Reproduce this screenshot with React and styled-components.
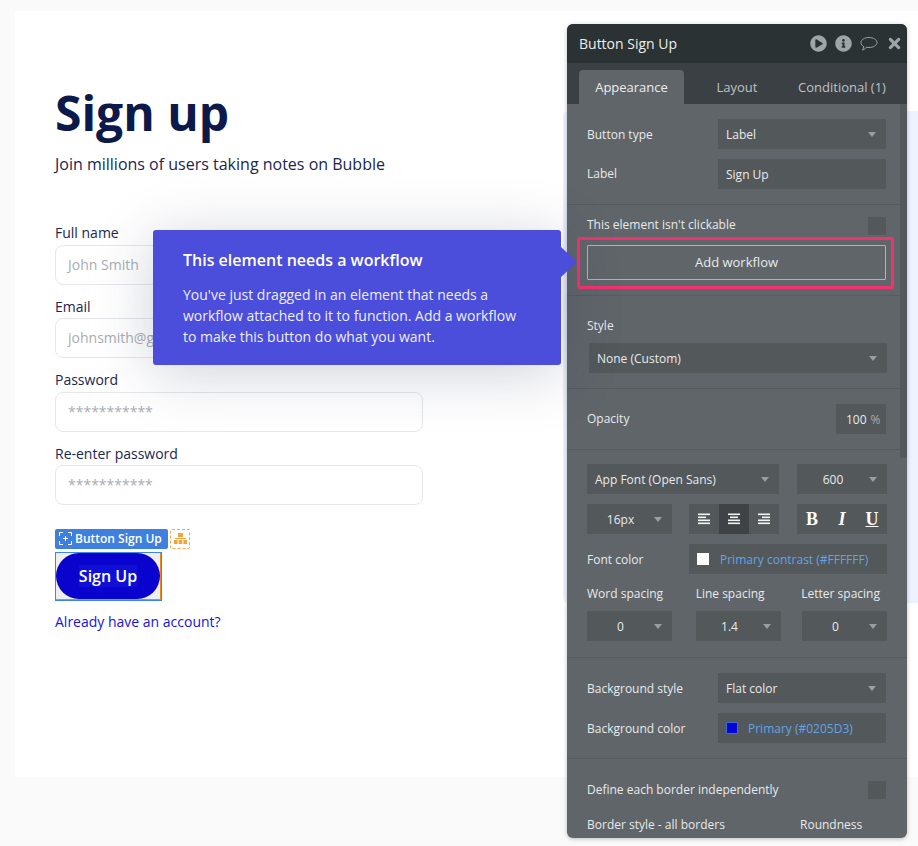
import React from 'react';
import styled, { createGlobalStyle } from 'styled-components';
import { FaPlayCircle, FaInfoCircle, FaTimes } from 'react-icons/fa';

const GlobalStyle = createGlobalStyle`
  html, body {
    margin: 0;
    padding: 0;
    background: #fafafa;
  }
  * {
    box-sizing: border-box;
  }
`;

const Page = styled.div`
  position: relative;
  width: 918px;
  height: 846px;
  padding: 11px 0 0 15px;
  overflow: hidden;
  font-family: "Open Sans", "Liberation Sans", sans-serif;
`;

const Canvas = styled.div`
  height: 766px;
  background: #fff;
  padding: 66px 0 0 40px;
`;

const Title = styled.h1`
  margin: 0;
  font-size: 48px;
  line-height: 72px;
  font-weight: 700;
  color: #0b1a4a;
`;

const Subtitle = styled.p`
  margin: 2px 0 46.4px;
  font-size: 16px;
  line-height: 26px;
  color: #1b2650;
`;

const Field = styled.div`
  width: 368px;
  margin-bottom: 12px;
`;

const FieldLabel = styled.div`
  font-size: 14px;
  line-height: 20px;
  margin-bottom: 1.5px;
  color: #1b2650;
`;

const Input = styled.div`
  height: 40px;
  border: 1px solid #e5e7eb;
  border-radius: 8px;
  padding-left: 12px;
  font-size: 14px;
  line-height: 38px;
  color: #a9adb3;
  background: #fff;
  white-space: nowrap;
  overflow: hidden;
`;

const BadgeRow = styled.div`
  display: flex;
  gap: 2px;
  margin-top: 23.6px;
  height: 20px;
`;

const Badge = styled.div`
  display: flex;
  align-items: center;
  gap: 3px;
  width: 113px;
  padding-left: 4px;
  background: #3f7fdd;
  border-radius: 2px;
  color: #fff;
  font-size: 12px;
  font-weight: 600;
  white-space: nowrap;
`;

const HierarchyBadge = styled.div`
  display: flex;
  align-items: center;
  justify-content: center;
  width: 20px;
  border: 1px dashed #f5a742;
  border-radius: 2px;
`;

const ButtonFrame = styled.div`
  width: 107px;
  height: 49px;
  margin-top: 3px;
  background: #eeeeee;
  border: 1px solid #3f86e4;
  box-shadow: inset -1px -1px 0 #e98a1b;
  padding: 0 1px 1px 0;
`;

const SignUpButton = styled.div`
  display: flex;
  align-items: center;
  justify-content: center;
  height: 100%;
  border-radius: 24px;
  background: #0a02cd;
  color: #fff;
  font-size: 16px;
  font-weight: 600;
`;

const ButtonText = styled.span`
  background: #0f0fd6;
  line-height: 22px;
`;

const LoginLink = styled.a`
  display: block;
  margin-top: 11px;
  font-size: 14px;
  line-height: 20px;
  color: #1414d6;
`;

const Backdrop = styled.div`
  position: absolute;
  left: 563px;
  top: 111px;
  width: 355px;
  height: 492px;
  background: #eef2fe;
  border-radius: 6px 0 0 6px;
`;

const Tooltip = styled.div`
  position: absolute;
  left: 153px;
  top: 230px;
  width: 408px;
  height: 135px;
  padding: 19px 30px 0;
  background: #4b4ddb;
  border-radius: 3px;
  color: #fff;
  box-shadow: 0 8px 60px rgba(35, 45, 85, 0.22);

  &::after {
    content: '';
    position: absolute;
    left: 100%;
    top: 17px;
    border-style: solid;
    border-width: 15.5px 0 15.5px 16px;
    border-color: transparent transparent transparent #4b4ddb;
  }
`;

const TooltipTitle = styled.div`
  font-size: 16px;
  font-weight: 600;
  line-height: 22px;
  margin-bottom: 13px;
`;

const TooltipBody = styled.div`
  font-size: 14px;
  line-height: 21px;
  color: #eeeefb;
`;

const Panel = styled.div`
  position: absolute;
  left: 567px;
  top: 24px;
  width: 340px;
  height: 814px;
  display: flex;
  flex-direction: column;
  overflow: hidden;
  background: #5f6569;
  border-radius: 6px;
  box-shadow: 0 1px 4px rgba(0, 0, 0, 0.25);
  color: #e8eaeb;
  font-size: 12px;
`;

const PanelHeader = styled.div`
  display: flex;
  align-items: center;
  justify-content: space-between;
  flex: none;
  height: 39px;
  padding: 0 4px 0 12px;
  background: #2b3234;
  font-size: 14px;
  color: #eceeee;
`;

const HeaderIcons = styled.div`
  display: flex;
  align-items: center;
  gap: 8px;
  color: #9da5a8;
  font-size: 17px;

  svg {
    display: block;
  }
`;

const Tabs = styled.div`
  display: flex;
  flex: none;
  align-items: flex-end;
  height: 41px;
  padding-left: 12px;
  background: #3a4043;
`;

const Tab = styled.div`
  display: flex;
  align-items: center;
  justify-content: center;
  width: ${p => p.$width}px;
  height: 34px;
  border-radius: 4px 4px 0 0;
  background: ${p => (p.$active ? '#5f6569' : 'transparent')};
  color: ${p => (p.$active ? '#eceeee' : '#bfc3c5')};
  font-size: 13px;
  white-space: nowrap;
`;

const Scrollbar = styled.div`
  position: absolute;
  right: 0;
  top: 80px;
  width: 7px;
  height: 354px;
  background: #54595c;
`;

const Section = styled.div`
  display: flex;
  flex-direction: column;
  flex: none;
  gap: ${p => p.$gap ?? 10}px;
  padding: ${p => p.$top ?? 15}px 21px ${p => p.$bottom ?? 15}px 20px;
  border-bottom: ${p => (p.$last ? 'none' : '1px solid #565b5e')};
`;

const Row = styled.div`
  display: flex;
  align-items: center;
  justify-content: space-between;
  flex: none;
  height: ${p => p.$height ?? 30}px;
  margin-top: ${p => p.$mt ?? 0}px;
  margin-right: ${p => p.$mr ?? 0}px;
`;

const RowText = styled.span`
  margin-top: ${p => p.$lift ?? 0}px;
  white-space: nowrap;
`;

const FlexRow = styled.div`
  display: flex;
  height: 30px;
`;

const SelectBox = styled.div`
  position: relative;
  display: flex;
  align-items: center;
  justify-content: ${p => (p.$center ? 'center' : 'flex-start')};
  flex: none;
  width: ${p => p.$width}px;
  height: 30px;
  margin-left: ${p => p.$ml ?? 0}px;
  padding: ${p => (p.$center ? '0 18px 0 0' : `0 0 0 ${p.$pad ?? 8}px`)};
  background: #53585b;
  color: #e8eaeb;
  white-space: nowrap;

  &::after {
    content: ${p => (p.$noArrow ? 'none' : "''")};
    position: absolute;
    right: 10px;
    top: 13px;
    border-style: solid;
    border-width: 5px 4.5px 0;
    border-color: #999ea1 transparent transparent;
  }
`;

const IconGroup = styled.div`
  display: flex;
  flex: none;
  width: 90px;
  height: 30px;
  margin-left: ${p => p.$ml}px;
  background: #53585b;
`;

const Check = styled.div`
  width: 18px;
  height: 18px;
  background: #53585b;
`;

const Percent = styled.span`
  color: #a9adaf;
  margin-left: 4px;
`;

const Highlight = styled.div`
  position: relative;
  height: 35px;

  &::before {
    content: '';
    position: absolute;
    inset: -8px -8px -9px -10px;
    border: 3px solid #f1326e;
    border-radius: 2px;
  }
`;

const WorkflowButton = styled.div`
  position: relative;
  display: flex;
  align-items: center;
  justify-content: center;
  height: 100%;
  padding-bottom: 2px;
  border: 1px solid #e8b02e;
  border-radius: 1px;
  font-size: 13px;
`;

const IconCell = styled.div`
  display: flex;
  align-items: center;
  justify-content: center;
  width: 30px;
  height: 30px;
  background: ${p => (p.$active ? '#3f4345' : 'transparent')};
  color: #fff;
  font-family: "Liberation Serif", serif;
  font-size: 18px;
  font-weight: 700;
  font-style: ${p => (p.$italic ? 'italic' : 'normal')};
  text-decoration: ${p => (p.$underline ? 'underline' : 'none')};
`;

const Swatch = styled.span`
  width: 12px;
  height: 12px;
  flex: none;
  margin-right: ${p => p.$gap ?? 10}px;
  background: ${p => p.$color};
  border: ${p => (p.$outlined ? '1px solid #3c6ed0' : 'none')};
`;

const ColorName = styled.span`
  color: #62a3e6;
`;

const SpacingLabels = styled.div`
  display: flex;
  flex: none;
  height: 18px;
  margin: 1px 0 -2px;
`;

const SpacingLabel = styled.span`
  width: ${p => p.$width}px;
  white-space: nowrap;
`;

const AlignIcon = ({ align }) => {
  return (
    <svg width="12" height="12" viewBox="0 0 12 12">
      {[12, 8, 12, 12].map((width, i) => {
        const left = align === 'left' ? 0 : align === 'right' ? 12 - width : (12 - width) / 2;
        return <rect key={i} x={left} y={i * 3 + 0.5} width={width} height="1.6" fill="#f2f3f3" />;
      })}
    </svg>
  );
};

const CommentIcon = () => (
  <svg width="18" height="16" viewBox="0 0 18 16" fill="none" stroke="#9da5a8" strokeWidth="1">
    <path d="M9 1.5c4.4 0 8 2.2 8 5s-3.600 5-8 5c-.9 0-1.700-.1-2.500-.3C5.500 12.600 4 13.800 2.400 14c.8-1 1.300-2 1.400-3.300C2 9.800 1 8.200 1 6.500c0-2.800 3.600-5 8-5z" />
  </svg>
);

const FocusIcon = () => (
  <svg width="13" height="13" viewBox="0 0 13 13" fill="none" stroke="#fff" strokeWidth="1">
    <path d="M.5 4V.5H4M9 .5h3.500V4M12.500 9v3.500H9M4 12.500H.5V9M6.500 4v5M4 6.500h5" />
  </svg>
);

const HierarchyIcon = () => (
  <svg width="13" height="11" viewBox="0 0 13 11" fill="#f2a33a">
    <rect x="4" y="0" width="5" height="4" />
    <rect x="1" y="5" width="11" height="1" />
    <rect x="0" y="7" width="3.600" height="4" />
    <rect x="4.700" y="7" width="3.600" height="4" />
    <rect x="9.400" y="7" width="3.600" height="4" />
  </svg>
);

export default function App() {
  return (
    <>
      <GlobalStyle />
      <Page>
        <Canvas>
          <Title>Sign up</Title>
          <Subtitle>Join millions of users taking notes on Bubble</Subtitle>
          <Field>
            <FieldLabel>Full name</FieldLabel>
            <Input>John Smith</Input>
          </Field>
          <Field>
            <FieldLabel>Email</FieldLabel>
            <Input>johnsmith@gmail.com</Input>
          </Field>
          <Field>
            <FieldLabel>Password</FieldLabel>
            <Input>***********</Input>
          </Field>
          <Field>
            <FieldLabel>Re-enter password</FieldLabel>
            <Input>***********</Input>
          </Field>
          <BadgeRow>
            <Badge>
              <FocusIcon />
              Button Sign Up
            </Badge>
            <HierarchyBadge>
              <HierarchyIcon />
            </HierarchyBadge>
          </BadgeRow>
          <ButtonFrame>
            <SignUpButton>
              <ButtonText>Sign Up</ButtonText>
            </SignUpButton>
          </ButtonFrame>
          <LoginLink>Already have an account?</LoginLink>
        </Canvas>

        <Backdrop />

        <Panel>
          <PanelHeader>
            Button Sign Up
            <HeaderIcons>
              <FaPlayCircle />
              <FaInfoCircle />
              <CommentIcon />
              <FaTimes />
            </HeaderIcons>
          </PanelHeader>
          <Tabs>
            <Tab $active $width={105}>Appearance</Tab>
            <Tab $width={106}>Layout</Tab>
            <Tab $width={104}>Conditional (1)</Tab>
          </Tabs>
          <Scrollbar />

          <Section>
            <Row>
              Button type
              <SelectBox $width={168}>Label</SelectBox>
            </Row>
            <Row>
              <RowText $lift={-1}>Label</RowText>
              <SelectBox $width={168} $noArrow>Sign Up</SelectBox>
            </Row>
          </Section>

          <Section $top={12}>
            <Row $height={18}>
              <RowText $lift={-4}>This element isn't clickable</RowText>
              <Check />
            </Row>
            <Highlight>
              <WorkflowButton>Add workflow</WorkflowButton>
            </Highlight>
          </Section>

          <Section $top={20} $gap={9}>
            <Row $height={18}>Style</Row>
            <SelectBox $width={298} $ml={2}>None (Custom)</SelectBox>
          </Section>

          <Section>
            <Row>
              <RowText $lift={-2}>Opacity</RowText>
              <SelectBox $width={50} $noArrow $pad={10}>
                100<Percent>%</Percent>
              </SelectBox>
            </Row>
          </Section>

          <Section $top={14} $bottom={16}>
            <FlexRow>
              <SelectBox $width={192}>App Font (Open Sans)</SelectBox>
              <SelectBox $width={90} $ml={18} $center>600</SelectBox>
            </FlexRow>
            <FlexRow>
              <SelectBox $width={85} $center>16px</SelectBox>
              <IconGroup $ml={17}>
                <IconCell><AlignIcon align="left" /></IconCell>
                <IconCell $active><AlignIcon align="center" /></IconCell>
                <IconCell><AlignIcon align="right" /></IconCell>
              </IconGroup>
              <IconGroup $ml={18}>
                <IconCell>B</IconCell>
                <IconCell $italic>I</IconCell>
                <IconCell $underline>U</IconCell>
              </IconGroup>
            </FlexRow>
            <Row $mr={-1}>
              Font color
              <SelectBox $width={198} $noArrow>
                <Swatch $color="#fff" $gap={11} />
                <ColorName>Primary contrast (#FFFFFF)</ColorName>
              </SelectBox>
            </Row>
            <SpacingLabels>
              <SpacingLabel $width={109}>Word spacing</SpacingLabel>
              <SpacingLabel $width={106}>Line spacing</SpacingLabel>
              <SpacingLabel $width={85}>Letter spacing</SpacingLabel>
            </SpacingLabels>
            <FlexRow>
              <SelectBox $width={85} $center>0</SelectBox>
              <SelectBox $width={85} $ml={24} $center>1.4</SelectBox>
              <SelectBox $width={85} $ml={21} $center>0</SelectBox>
            </FlexRow>
          </Section>

          <Section>
            <Row>
              Background style
              <SelectBox $width={168}>Flat color</SelectBox>
            </Row>
            <Row>
              Background color
              <SelectBox $width={168} $noArrow>
                <Swatch $color="#0205d3" $outlined />
                <ColorName>Primary (#0205D3)</ColorName>
              </SelectBox>
            </Row>
          </Section>

          <Section $top={22} $last>
            <Row $height={18}>
              <RowText $lift={-2}>Define each border independently</RowText>
              <Check />
            </Row>
            <Row $height={18} $mt={6}>
              Border style - all borders
              <SpacingLabel $width={86}>Roundness</SpacingLabel>
            </Row>
          </Section>
        </Panel>

        <Tooltip>
          <TooltipTitle>This element needs a workflow</TooltipTitle>
          <TooltipBody>
            You've just dragged in an element that needs a
            <br />
            workflow attached to it to function. Add a workflow
            <br />
            to make this button do what you want.
          </TooltipBody>
        </Tooltip>
      </Page>
    </>
  );
}
